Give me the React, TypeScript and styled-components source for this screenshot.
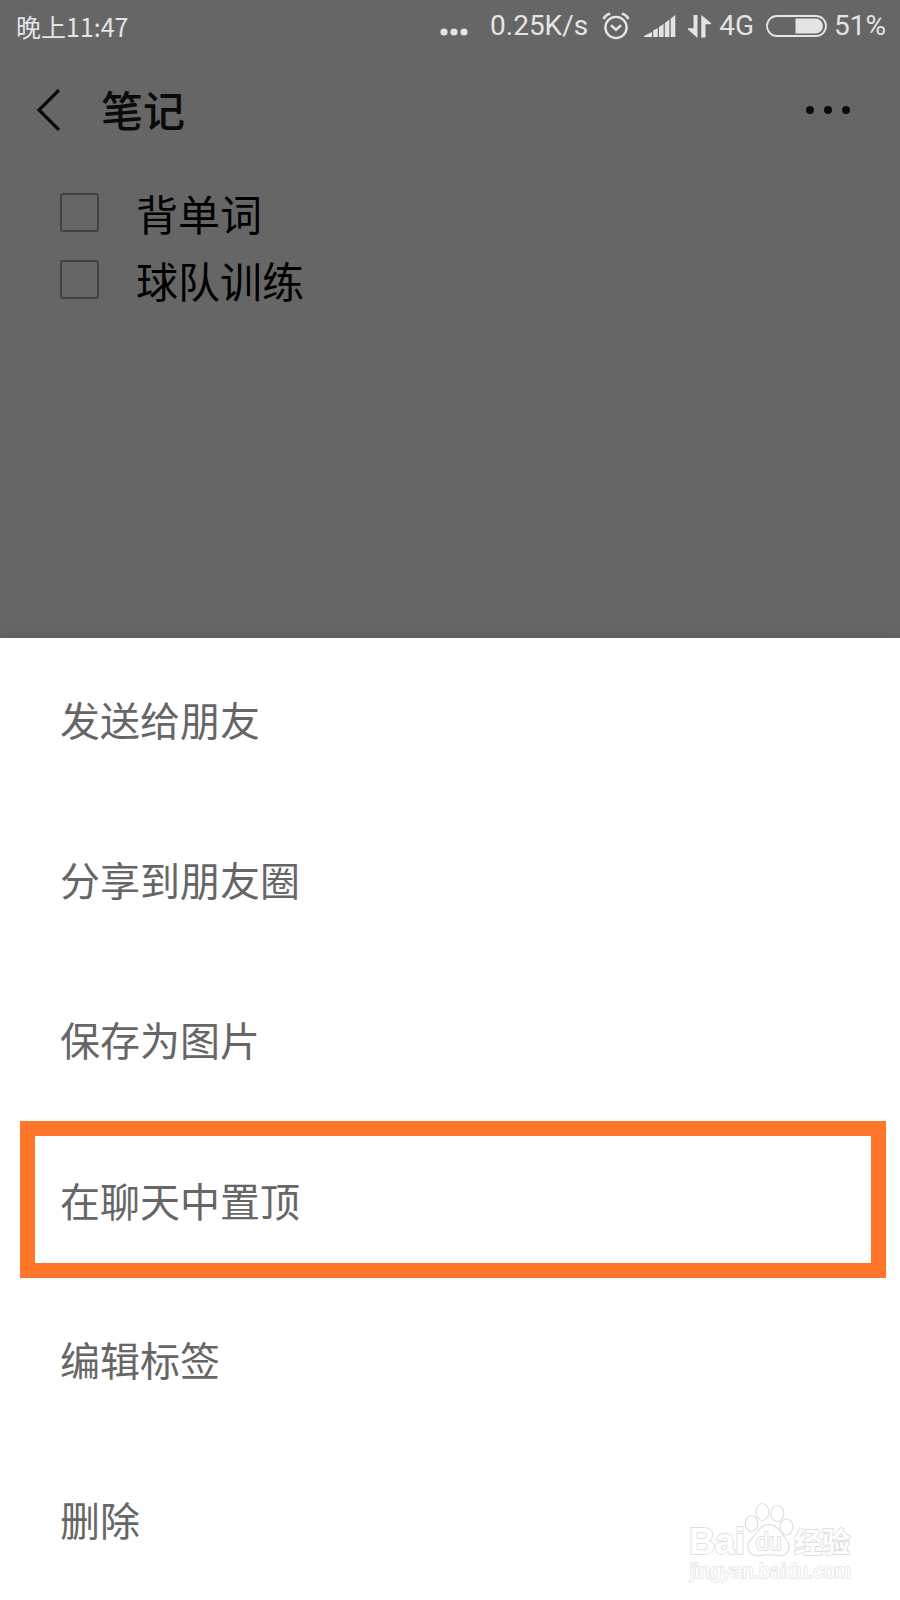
import React from "react";
import styled, { createGlobalStyle } from "styled-components";

const GlobalStyle = createGlobalStyle`
  * { box-sizing: border-box; }
  body {
    margin: 0;
    background: #666;
    font-family: "Noto Sans CJK SC", sans-serif;
  }
  button {
    font: inherit;
    color: inherit;
    background: none;
    border: 0;
    padding: 0;
    text-align: left;
    cursor: pointer;
  }
`;

const Screen = styled.div`
  display: flex;
  flex-direction: column;
  min-height: 100vh;
`;

const StatusBar = styled.div`
  display: flex;
  align-items: center;
  height: 52px;
  padding: 0 14px 0 16px;
  color: #e4e4e4;
  font-family: Roboto, "Noto Sans CJK SC", sans-serif;
  font-size: 28px;
  line-height: 32px;

  svg { display: block; flex: none; }
`;

const Clock = styled.span`
  margin-right: auto;
  font-family: "Noto Sans CJK SC", sans-serif;
  font-size: 25px;
`;

const StatusItem = styled.span<{ $gap: number }>`
  margin-left: ${(p) => p.$gap}px;
`;

const Notices = styled.span`
  padding-top: 12px;
`;

const Header = styled.header`
  display: flex;
  align-items: center;
  height: 116px;
  padding: 0 50px 0 36px;
  color: #0a0a0a;

  svg { display: block; }
`;

const Title = styled.h1`
  flex: 1;
  margin: 0 0 0 40px;
  padding-bottom: 3px;
  font-size: 42px;
  line-height: 60px;
  font-weight: 500;
`;

const TodoList = styled.ul`
  flex: 1;
  margin: 0;
  padding: 11px 60px;
  list-style: none;
`;

const Todo = styled.label`
  display: flex;
  align-items: center;
  gap: 37px;
  height: 67px;
  color: #000;
  font-size: 42px;
  line-height: 60px;
`;

const Tick = styled.input`
  appearance: none;
  width: 39px;
  height: 39px;
  margin: 0;
  border: 2px solid #424242;
  border-radius: 3px;
`;

const Sheet = styled.div`
  position: relative;
  display: flex;
  flex-direction: column;
  padding: 1px 0;
  background: #fff;
  box-shadow: 0 0 16px rgba(0, 0, 0, 0.12);
`;

const MenuItem = styled.button<{ $marked?: boolean }>`
  && {
    height: ${(p) => (p.$marked ? 157 : 160)}px;
    margin: ${(p) => (p.$marked ? "2px 14px 1px 20px" : "0")};
    padding: 0 ${(p) => (p.$marked ? 25 : 60)}px;
    border: ${(p) => (p.$marked ? "15px solid #ff762b" : "0")};
    color: #666;
    font-size: 40px;
    line-height: 60px;
  }
`;

const Watermark = styled.div`
  position: absolute;
  right: 40px;
  bottom: 14px;
  pointer-events: none;

  svg { display: block; }
`;

const AlarmIcon = () => (
  <svg width="28" height="28" viewBox="0 0 28 28" fill="none" stroke="currentColor" strokeWidth="2.4">
    <circle cx="14" cy="15.5" r="10.6" />
    <path d="M9 13.2l5 4.500 5-4.500" strokeWidth="2.6" />
    <path d="M1.600 7C3 4 5.200 2.300 8.200 1.500M26.400 7C25 4 22.800 2.300 19.800 1.500" strokeWidth="2.8" />
  </svg>
);

const SignalIcon = () => (
  <svg width="32" height="22" viewBox="0 0 32 22" fill="currentColor">
    <path d="M0 22v-1l8-4v5zM9.200 22v-6.500l4.600-2.500v9zM15 22V12l4.600-3v13zM20.800 22V8l4.600-3.500V22zM26.700 22V3.500L31.300 0v22z" />
  </svg>
);

const DataIcon = () => (
  <svg width="23" height="23" viewBox="0 0 23 23" fill="currentColor">
    <path d="M5.500 0h4v23L0 14.500v-1.300h5.500zM13.300 22.500V0L23 8v1.300h-5.500v13.200z" />
  </svg>
);

const BatteryIcon = () => (
  <svg width="61" height="22" viewBox="0 0 61 22">
    <rect x="1" y="1" width="59" height="20" rx="10" fill="none" stroke="currentColor" strokeWidth="1.8" />
    <path d="M29.500 3.500h20a7.500 7.500 0 0 1 0 15h-20z" fill="currentColor" />
  </svg>
);

const NoticeDots = () => (
  <svg width="28" height="8" viewBox="0 0 28 8" fill="currentColor">
    <circle cx="4" cy="4" r="3.6" />
    <circle cx="14" cy="4" r="3.6" />
    <circle cx="24" cy="4" r="3.6" />
  </svg>
);

const BaiduLogo = () => (
  <svg width="172" height="84" viewBox="0 0 172 84" fontFamily='"Liberation Sans", sans-serif'>
    <g fill="#fff" stroke="#dedede" strokeWidth="1.2">
      <ellipse cx="63.500" cy="21.500" rx="6.300" ry="8" />
      <ellipse cx="74.500" cy="10" rx="6.300" ry="8.500" />
      <ellipse cx="89.300" cy="11.500" rx="6.500" ry="8" />
      <ellipse cx="98.500" cy="25" rx="6.500" ry="8" />
      <path d="M81 22.500c-6 0-9 4-12 8-4 5-9 8-9 14 0 7 6 10 12 9 6-1 12-1 18 0 7 1 11-3 11-9 0-6-5-9-8-14-3-4-6-8-12-8z" />
    </g>
    <g fill="#fff" stroke="#dedede" strokeWidth="1.8" paintOrder="stroke" fontWeight="700">
      <text x="1" y="52" fontSize="36">Bai</text>
      <text x="68" y="48" fontSize="23" fontWeight="400">du</text>
      <text x="106" y="51" fontSize="28" fontFamily='"Noto Sans CJK SC", sans-serif'>经验</text>
    </g>
    <text x="2" y="76" fontSize="20" fill="#fff" stroke="#e2e2e2" strokeWidth="1.5" paintOrder="stroke">
      jingyan.baidu.com
    </text>
  </svg>
);

const todos = ["背单词", "球队训练"];
const actions = ["发送给朋友", "分享到朋友圈", "保存为图片", "在聊天中置顶", "编辑标签", "删除"];

export default function App() {
  return (
    <Screen>
      <GlobalStyle />
      <StatusBar>
        <Clock>晚上11:47</Clock>
        <Notices><NoticeDots /></Notices>
        <StatusItem $gap={22}>0.25K/s</StatusItem>
        <StatusItem $gap={14}><AlarmIcon /></StatusItem>
        <StatusItem $gap={14}><SignalIcon /></StatusItem>
        <StatusItem $gap={12}><DataIcon /></StatusItem>
        <StatusItem $gap={8}>4G</StatusItem>
        <StatusItem $gap={12}><BatteryIcon /></StatusItem>
        <StatusItem $gap={7}>51%</StatusItem>
      </StatusBar>

      <Header>
        <button aria-label="返回">
          <svg width="25" height="42" viewBox="0 0 25 42" fill="none" stroke="currentColor" strokeWidth="3.2">
            <path d="M23 1L3 21l20 20" />
          </svg>
        </button>
        <Title>笔记</Title>
        <button aria-label="更多">
          <svg width="44" height="8" viewBox="0 0 44 8" fill="currentColor">
            <circle cx="4" cy="4" r="4" />
            <circle cx="22" cy="4" r="4" />
            <circle cx="40" cy="4" r="4" />
          </svg>
        </button>
      </Header>

      <TodoList>
        {todos.map((text) => (
          <li key={text}>
            <Todo>
              <Tick type="checkbox" />
              {text}
            </Todo>
          </li>
        ))}
      </TodoList>

      <Sheet>
        {actions.map((text) => (
          <MenuItem key={text} $marked={text === "在聊天中置顶"}>
            {text}
          </MenuItem>
        ))}
        <Watermark>
          <BaiduLogo />
        </Watermark>
      </Sheet>
    </Screen>
  );
}
